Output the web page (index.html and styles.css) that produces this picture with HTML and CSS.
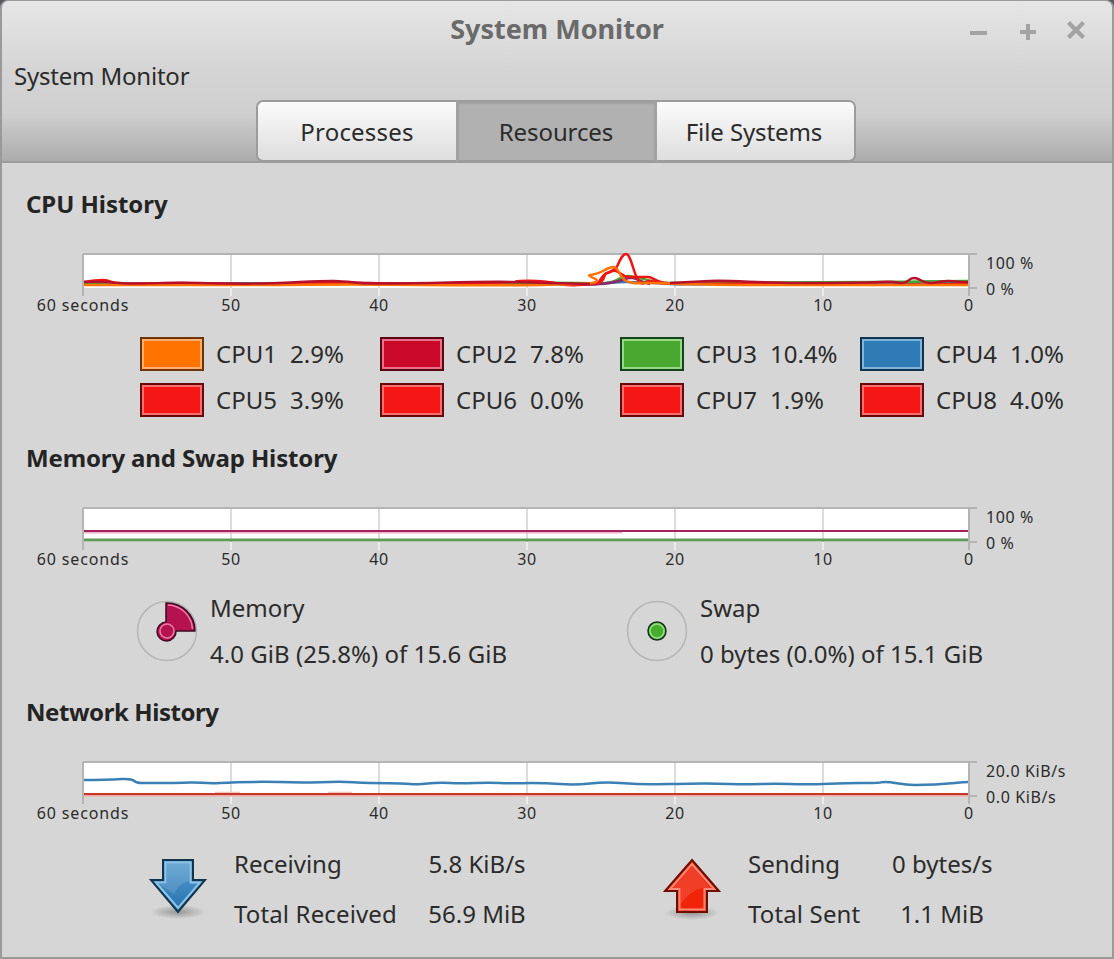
FILE: index.html
```html
<!DOCTYPE html>
<html lang="en">
<head>
<meta charset="utf-8">
<title>System Monitor</title>
<link rel="stylesheet" href="styles.css">
</head>
<body>
<div class="window">
  <header class="header">
    <div class="titlebar">
      <h1 class="title">System Monitor</h1>
      <div class="controls">
        <svg class="ctl" width="20" height="24" viewBox="0 0 20 24"><path d="M0 12h17v4H0z" fill="#a3a3a3"/></svg>
        <svg class="ctl" width="20" height="24" viewBox="0 0 20 24"><path d="M8 5h4v6h6v4h-6v6H8v-6H2v-4h6z" fill="#a3a3a3"/></svg>
        <svg class="ctl" width="20" height="24" viewBox="0 0 20 24"><path d="M4 2l6 6 6-6 3 3-6 6 6 6-3 3-6-6-6 6-3-3 6-6-6-6z" fill="#a3a3a3"/></svg>
      </div>
    </div>
    <div class="menu">System Monitor</div>
    <nav class="tabs">
      <div class="tab tab-wide">Processes</div>
      <div class="tab tab-tight active">Resources</div>
      <div class="tab tab-tight">File Systems</div>
    </nav>
  </header>

  <main class="content">
    <section class="section">
      <h2 class="section-title">CPU History</h2>
      <svg class="chart" width="1110" height="70" viewBox="0 248 1110 70">
        <g class="grid-low"><path d="M231 288V296M379 288V296M527 288V296M675 288V296M823 288V296"/></g>
        <rect x="84" y="255" width="885" height="33" fill="#fff"/>
        <g class="grid"><path d="M231 255V288M379 255V288M527 255V288M675 255V288M823 255V288"/></g>
        <g class="frame"><path d="M83 254H977M83 254V296M969 254V296M969 288H977"/></g>
        <g class="series">
          <path stroke="#2f7bb5" d="M84 284 S200 283 320 283 S560 285 590 284 S610 282 625 282 S650 283 670 284 S880 283 905 283 S925 280 940 282 S955 283 968 283"/>
          <path stroke="#48a830" d="M84 284 S340 284 480 283 S590 284 605 283 S618 276 628 276 S650 283 670 283 S780 283 880 282 S960 281 968 281"/>
          <path stroke="#8a2a6a" d="M570 284 S590 285 600 284 S615 283 625 279 S640 283 650 284"/>
          <path stroke="#f01515" d="M84 282 S95 280 103 280 S112 284 120 284 S150 283 180 283 S230 285 280 284 S350 282 370 283 S400 284 470 283 S505 282 520 281 S545 281 560 284 S590 284 598 283 S603 273 607 273 S612 269 616 269 C619 262 622 254 626 254 C631 254 633 272 638 280 S646 280 650 281 S660 284 680 284 S760 283 800 284 S900 285 968 284"/>
          <path stroke="#f01515" d="M598 284 S603 274 607 273 S612 270 616 271 S622 277 630 277 S642 277 648 277 S655 283 668 283"/>
          <path stroke="#ff7300" d="M84 285 S160 285 240 285 S330 284 420 285 S540 285 578 284 S584 276 590 275 S598 274 603 271 S610 267 614 267 S620 278 626 281 S636 283 650 283 S700 285 760 285 S860 285 968 285"/>
          <path stroke="#b8102c" d="M84 282 S100 281 120 283 S150 282 200 283 S260 284 300 282 S340 281 360 283 S480 281 510 282 S560 283 590 284 M670 283 S690 282 710 281 S760 283 800 283 S860 283 880 282 S895 283 902 283 S908 278 914 278 S922 283 930 283 S940 281 948 281 S958 282 968 282"/>
        </g>
        <g class="axis">
          <text class="axis-wide" x="83" y="311" text-anchor="middle">60 seconds</text>
          <text x="231" y="311" text-anchor="middle">50</text>
          <text x="379" y="311" text-anchor="middle">40</text>
          <text x="527" y="311" text-anchor="middle">30</text>
          <text x="675" y="311" text-anchor="middle">20</text>
          <text x="823" y="311" text-anchor="middle">10</text>
          <text x="969" y="311" text-anchor="middle">0</text>
          <text x="986" y="269">100 %</text>
          <text x="986" y="295">0 %</text>
        </g>
      </svg>
      <div class="legend">
        <div class="cpu"><span class="swatch s-orange"></span><span class="cpu-name">CPU1</span><span class="cpu-value">2.9%</span></div>
        <div class="cpu"><span class="swatch s-crimson"></span><span class="cpu-name">CPU2</span><span class="cpu-value">7.8%</span></div>
        <div class="cpu"><span class="swatch s-green"></span><span class="cpu-name">CPU3</span><span class="cpu-value">10.4%</span></div>
        <div class="cpu"><span class="swatch s-blue"></span><span class="cpu-name">CPU4</span><span class="cpu-value">1.0%</span></div>
        <div class="cpu"><span class="swatch s-red"></span><span class="cpu-name">CPU5</span><span class="cpu-value">3.9%</span></div>
        <div class="cpu"><span class="swatch s-red"></span><span class="cpu-name">CPU6</span><span class="cpu-value">0.0%</span></div>
        <div class="cpu"><span class="swatch s-red"></span><span class="cpu-name">CPU7</span><span class="cpu-value">1.9%</span></div>
        <div class="cpu"><span class="swatch s-red"></span><span class="cpu-name">CPU8</span><span class="cpu-value">4.0%</span></div>
      </div>
    </section>

    <section class="section">
      <h2 class="section-title title-tight">Memory and Swap History</h2>
      <svg class="chart" width="1110" height="70" viewBox="0 248 1110 70">
        <g class="grid-low"><path d="M231 288V296M379 288V296M527 288V296M675 288V296M823 288V296"/></g>
        <rect x="84" y="255" width="885" height="33" fill="#fff"/>
        <g class="grid"><path d="M231 255V288M379 255V288M527 255V288M675 255V288M823 255V288"/></g>
        <g class="frame"><path d="M83 254H977M83 254V296M969 254V296M969 288H977"/></g>
        <path d="M84 278.500H622" fill="none" stroke="#eeb4cb" stroke-width="2"/>
        <path d="M84 277H968" fill="none" stroke="#a5235c" stroke-width="2"/>
        <path d="M84 286H968" fill="none" stroke="#5f9a5a" stroke-width="3"/>
        <g class="axis">
          <text class="axis-wide" x="83" y="311" text-anchor="middle">60 seconds</text>
          <text x="231" y="311" text-anchor="middle">50</text>
          <text x="379" y="311" text-anchor="middle">40</text>
          <text x="527" y="311" text-anchor="middle">30</text>
          <text x="675" y="311" text-anchor="middle">20</text>
          <text x="823" y="311" text-anchor="middle">10</text>
          <text x="969" y="311" text-anchor="middle">0</text>
          <text x="986" y="269">100 %</text>
          <text x="986" y="295">0 %</text>
        </g>
      </svg>
      <div class="usage">
        <div class="usage-item">
          <svg class="pie" width="62" height="62" viewBox="-31 -31 62 62">
            <circle r="29.500" fill="none" stroke="#b5b5b5" stroke-width="1.500"/>
            <path d="M-1 -9 V-28 A28 28 0 0 1 28 0 H9 A9.500 9.500 0 1 1 -1 -9 Z" fill="#b5134f" stroke="#3d0a22" stroke-width="1.500" stroke-linejoin="round"/>
            <path d="M1 -26 A25.500 25.500 0 0 1 25.500 -2" fill="none" stroke="#e77da6" stroke-width="1.500"/>
            <circle r="7" fill="none" stroke="#e77da6" stroke-width="1.500"/>
          </svg>
          <div class="usage-text"><div>Memory</div><div class="usage-wide">4.0 GiB (25.8%) of 15.6 GiB</div></div>
        </div>
        <div class="usage-item">
          <svg class="pie" width="62" height="62" viewBox="-31 -31 62 62">
            <circle r="29.500" fill="none" stroke="#b5b5b5" stroke-width="1.500"/>
            <circle r="9" fill="#46ae2e" stroke="#16301a" stroke-width="1.500"/>
            <circle r="7" fill="none" stroke="#9ade88" stroke-width="1.500"/>
          </svg>
          <div class="usage-text"><div>Swap</div><div>0 bytes (0.0%) of 15.1 GiB</div></div>
        </div>
      </div>
    </section>

    <section class="section">
      <h2 class="section-title title-net">Network History</h2>
      <svg class="chart" width="1110" height="70" viewBox="0 248 1110 70">
        <g class="grid-low"><path d="M231 288V296M379 288V296M527 288V296M675 288V296M823 288V296"/></g>
        <rect x="84" y="255" width="885" height="33" fill="#fff"/>
        <g class="grid"><path d="M231 255V288M379 255V288M527 255V288M675 255V288M823 255V288"/></g>
        <g class="frame"><path d="M83 254H977M83 254V296M969 254V296M969 288H977"/></g>
        <path d="M84 272 S105 272 122 271 S130 275 142 275 S180 275 190 274.500 S205 276 220 275 S245 273.500 280 274 S310 275 330 274 S352 275 370 275 S400 275 410 276 S430 274 450 275 S480 274 500 275 S530 274 560 276 S590 273 620 275 S650 276 670 276 S700 275 730 276 S760 275 790 276 S830 275 860 275 S875 274 885 274 S900 277 915 277 S945 276 955 275 S965 274 968 274" fill="none" stroke="#3a80b5" stroke-width="2.500"/>
        <path d="M84 287H968" fill="none" stroke="#f2a8a0" stroke-width="3"/>
        <path d="M215 284.500H240M328 284.500H352" fill="none" stroke="#f4c4bd" stroke-width="1.500"/>
        <path d="M84 286H968" fill="none" stroke="#c4382c" stroke-width="2"/>
        <g class="axis">
          <text class="axis-wide" x="83" y="311" text-anchor="middle">60 seconds</text>
          <text x="231" y="311" text-anchor="middle">50</text>
          <text x="379" y="311" text-anchor="middle">40</text>
          <text x="527" y="311" text-anchor="middle">30</text>
          <text x="675" y="311" text-anchor="middle">20</text>
          <text x="823" y="311" text-anchor="middle">10</text>
          <text x="969" y="311" text-anchor="middle">0</text>
          <text x="986" y="269">20.0 KiB/s</text>
          <text x="986" y="295">0.0 KiB/s</text>
        </g>
      </svg>
      <div class="net">
        <div class="net-item">
          <svg class="arrow" width="64" height="64" viewBox="0 0 64 64">
            <defs>
              <linearGradient id="blue" x1="0" y1="0" x2="0" y2="1"><stop offset="0" stop-color="#5a9fd0"/><stop offset="1" stop-color="#2470ad"/></linearGradient>
              <radialGradient id="shadow"><stop offset="0" stop-color="#000" stop-opacity=".3"/><stop offset="1" stop-color="#000" stop-opacity="0"/></radialGradient>
            </defs>
            <ellipse cx="32" cy="55" rx="28" ry="7" fill="url(#shadow)"/>
            <path d="M17 3H47V23H59L32 55 5 23H17Z" fill="url(#blue)" stroke="#11344f" stroke-width="2"/>
            <path d="M19.500 5.500H44.500V25.500H54L32 51 10 25.500H19.500Z" fill="none" stroke="#8fc3e6" stroke-width="2"/>
            <path d="M21 27V7H43V24C37 25 31 30 28 37L13 27Z" fill="#fff" fill-opacity=".13"/>
          </svg>
          <div class="net-grid">
            <span>Receiving</span><span class="net-value">5.8 KiB/s</span>
            <span class="net-label-wide">Total Received</span><span class="net-value">56.9 MiB</span>
          </div>
        </div>
        <div class="net-item net-up">
          <svg class="arrow" width="64" height="64" viewBox="0 0 64 64">
            <ellipse cx="32" cy="56" rx="28" ry="7" fill="url(#shadow)"/>
            <path d="M32 3L59 34H47V55H17V34H5Z" fill="#f02408" stroke="#6d0d00" stroke-width="2"/>
            <path d="M32 7L54 32H44.500V52.500H19.500V32H10Z" fill="none" stroke="#ff8a78" stroke-width="2"/>
            <path d="M32 9L13 31H21V47C26 39 35 32 43 31L50 31Z" fill="#fff" fill-opacity=".12"/>
          </svg>
          <div class="net-grid net-grid-up">
            <span>Sending</span><span class="net-value">0 bytes/s</span>
            <span class="net-label-wide">Total Sent</span><span class="net-value">1.1 MiB</span>
          </div>
        </div>
      </div>
    </section>
  </main>
</div>
</body>
</html>
```
FILE: styles.css
```css
* { box-sizing: border-box; }
html, body { margin: 0; padding: 0; background: #55585c; }
body { width: 1114px; height: 959px; overflow: hidden; font-family: "Noto Sans", sans-serif; font-size: 24px; color: #2b2b2b; }
.window { width: 1114px; height: 959px; background: #d6d6d6; border-radius: 8px 8px 0 0; border-style: solid; border-color: #9a9a9a; border-width: 1px 2px 2px 2px; display: flex; flex-direction: column; }
.header { height: 162px; flex: none; display: flex; flex-direction: column; background: linear-gradient(#e6e6e6, #d4d4d4 45%, #cfcfcf 70%, #acacac); border-bottom: 2px solid #9c9c9c; border-radius: 7px 7px 0 0; }
.titlebar { height: 56px; flex: none; position: relative; display: flex; align-items: center; justify-content: center; }
.title { margin: 0; font-size: 27px; line-height: 56px; font-weight: 700; color: #6a6a6a; }
.controls { position: absolute; right: 26px; top: 18px; display: flex; gap: 28px; }
.ctl { display: block; }
.menu { height: 33px; flex: none; line-height: 33px; padding-left: 12px; margin-top: 2px; letter-spacing: -.2px; }
.tabs { display: flex; justify-content: center; margin-top: 8px; margin-left: -2px; height: 62px; }
.tab { width: 200px; height: 62px; border: 2px solid #9c9c9c; border-left-width: 0; border-right-width: 0; background: linear-gradient(#fbfbfb, #dedede); display: flex; align-items: center; justify-content: center; }
.tab-wide { letter-spacing: .2px; }
.tab-tight { letter-spacing: -.1px; }
.tab:first-child { border-left-width: 2px; border-radius: 7px 0 0 7px; }
.tab:last-child { border-right-width: 2px; border-radius: 0 7px 7px 0; width: 199px; padding-right: 3px; }
.tab.active { width: 201px; padding-right: 1px; background: #b1b1b1; border-left: 3px solid #a2a2a2; border-right: 3px solid #a2a2a2; box-shadow: inset 0 2px 1px #a2a2a2; }
.content { flex: 1; display: flex; flex-direction: column; }
.section { display: flex; flex-direction: column; margin-left: -2px; }
.section-title { margin: 24px 0 28px 26px; font-size: 24px; line-height: 33px; font-weight: 700; color: #242424; letter-spacing: -.05px; }
.title-tight { letter-spacing: -.13px; }
.title-net { margin-top: 25px; letter-spacing: -.43px; }
.chart { display: block; flex: none; }
.grid path { stroke: #dcdcdc; stroke-width: 2; fill: none; }
.grid-low path { stroke: #ececec; stroke-width: 2; fill: none; }
.frame path { stroke: #b4b4b4; stroke-width: 2; fill: none; }
.series path { fill: none; stroke-width: 2.500; stroke-linejoin: round; }
.axis text { font-family: "Noto Sans", sans-serif; font-size: 16px; letter-spacing: .6px; fill: #2b2b2b; }
.axis .axis-wide { letter-spacing: .85px; }
.legend { display: grid; grid-template-columns: repeat(4, 240px); row-gap: 12px; margin: 19px 0 0 140px; }
.cpu { display: flex; align-items: center; height: 34px; white-space: nowrap; }
.swatch { width: 64px; height: 34px; border: 2px solid; margin-right: 12px; flex: none; }
.cpu-name { width: 74px; padding-bottom: 2px; }
.cpu-value { padding-bottom: 2px; }
.s-orange { background: #ff7300; border-color: #6d3506; box-shadow: inset 0 0 0 2px #ffae70; }
.s-crimson { background: #c9082a; border-color: #5a0612; box-shadow: inset 0 0 0 2px #e8708a; }
.s-green { background: #48a830; border-color: #17431a; box-shadow: inset 0 0 0 2px #94d884; }
.s-blue { background: #2f7bb5; border-color: #12344f; box-shadow: inset 0 0 0 2px #80b4dc; }
.s-red { background: #f51616; border-color: #660808; box-shadow: inset 0 0 0 2px #fa7070; }
.usage { display: grid; grid-template-columns: 490px 1fr; margin: 19px 0 0 136px; }
.usage-item { display: flex; align-items: center; gap: 12px; }
.pie { flex: none; }
.usage-text { line-height: 33px; display: flex; flex-direction: column; gap: 13px; white-space: nowrap; }
.usage-wide { letter-spacing: .04px; }
.net { display: grid; grid-template-columns: 514px 1fr; margin: 21px 0 0 146px; }
.net-item { display: flex; align-items: center; gap: 24px; }
.arrow { flex: none; }
.net-grid { display: grid; grid-template-columns: 190px 106px; row-gap: 17px; line-height: 33px; white-space: nowrap; }
.net-grid-up { grid-template-columns: 144px 100px; }
.net-label-wide { letter-spacing: .14px; }
.net-value { text-align: center; }
```
